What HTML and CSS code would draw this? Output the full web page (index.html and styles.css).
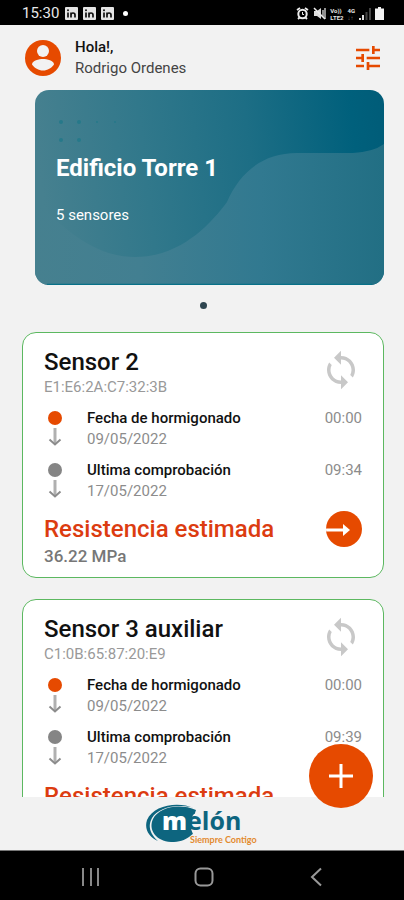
FILE: index.html
```
<!DOCTYPE html>
<html lang="es">
<head>
  <meta charset="utf-8">
  <meta name="viewport" content="width=device-width, initial-scale=1">
  <title>Melón - Sensores</title>
  <link rel="stylesheet" href="styles.css">
</head>
<body>
  <svg class="sprite" aria-hidden="true">
    <symbol id="sync" viewBox="0 0 24 24">
      <path d="M12 4V1L8 5l4 4V6c3.31 0 6 2.69 6 6 0 1.01-.25 1.97-.7 2.8l1.46 1.46C19.54 15.03 20 13.57 20 12c0-4.42-3.58-8-8-8zm0 14c-3.31 0-6-2.69-6-6 0-1.01.25-1.97.7-2.8L5.24 7.74C4.46 8.97 4 10.43 4 12c0 4.42 3.58 8 8 8v3l4-4-4-4v3z"/>
    </symbol>
    <symbol id="down" viewBox="0 0 14 18">
      <path d="M7 0v16" fill="none" stroke="#b0b0b0" stroke-width="3"/>
      <path d="M1.500 11.500L7 16.500l5.500-5" fill="none" stroke="#8c8c8c" stroke-width="2"/>
    </symbol>
    <symbol id="go" viewBox="0 0 36 36">
      <path d="M0 19h19" stroke="#fff" stroke-width="3"/>
      <path d="M17 13l7 6-7 6z" fill="#fff"/>
    </symbol>
    <symbol id="linkedin" viewBox="0 0 13 13">
      <rect width="13" height="13" rx="1" fill="#e4e4e4"/>
      <path d="M3 5.500V10.500M6 10.500V5.500M6 8q0-2 2-2t2 2v2.500" fill="none" stroke="#111" stroke-width="1.700"/>
      <circle cx="3" cy="3.200" r="1" fill="#111"/>
    </symbol>
  </svg>

  <div class="statusbar">
    <span class="clock">15:30</span>
    <svg class="notif"><use href="#linkedin"/></svg>
    <svg class="notif"><use href="#linkedin"/></svg>
    <svg class="notif"><use href="#linkedin"/></svg>
    <span class="notif-dot"></span>
    <div class="status-icons">
      <svg width="13" height="13" viewBox="0 0 13 13" fill="none" stroke="#eee">
        <circle cx="6.500" cy="7" r="4.200" stroke-width="2"/>
        <path d="M1 3l3-2M12 3L9 1M2 12l2-2M11 12l-2-2" stroke-width="1.800"/>
        <path d="M6.500 5v2.500H8"/>
      </svg>
      <svg width="13" height="13" viewBox="0 0 13 13">
        <path d="M1 4h3l4-3v11L4 9H1z" fill="#ddd"/>
        <path d="M10 3v7M12 1v11" stroke="#ddd" stroke-width="1.300"/>
        <path d="M1 1l11 11" stroke="#eee" stroke-width="1.500"/>
      </svg>
      <div class="net"><span>Vo))</span><span>LTE2</span></div>
      <div class="net"><span>4G</span><span class="traffic">↓↑</span></div>
      <svg width="12" height="12" viewBox="0 0 12 12">
        <path d="M0 10h2v2H0zM3 7h2v5H3z" fill="#ddd"/>
        <path d="M6.500 4h2v8h-2zM10 0h2v12h-2z" fill="#444"/>
      </svg>
      <svg width="9" height="13" viewBox="0 0 9 13">
        <path d="M3 0h3v1.500h3V13H0V1.500h3z" fill="#f2f2f2"/>
      </svg>
    </div>
  </div>

  <header class="header">
    <svg class="avatar" viewBox="0 0 36 36">
      <circle cx="18" cy="18" r="18" fill="#e64a00"/>
      <circle cx="18" cy="11" r="6" fill="#f2f2f2"/>
      <path d="M7 24.500C7 20.500 14 19 18 19s11 1.500 11 5.500c-2.500 3.500-6.500 6-11 6s-8.500-2.500-11-6z" fill="#f2f2f2"/>
    </svg>
    <div class="greeting">
      <strong>Hola!,</strong>
      <span>Rodrigo Ordenes</span>
    </div>
    <button class="icon-btn" type="button" aria-label="Filtros">
      <svg width="32" height="32" viewBox="0 0 24 24" fill="#e64a00">
        <path d="M3 17v2h6v-2H3zM3 5v2h10V5H3zm10 16v-2h8v-2h-8v-2h-2v6h2zM7 9v2H3v2h4v2h2V9H7zm14 4v-2H11v2h10zm-6-4h2V7h4V5h-4V3h-2v6z"/>
      </svg>
    </button>
  </header>

  <main class="main">
    <section class="building">
      <svg class="building-bg" viewBox="0 0 349 195" preserveAspectRatio="none">
        <defs>
          <linearGradient id="base" gradientUnits="userSpaceOnUse" x1="0" y1="40" x2="349" y2="0">
            <stop offset="0" stop-color="#46808f"/>
            <stop offset="0.300" stop-color="#31788b"/>
            <stop offset="0.600" stop-color="#1d6e85"/>
            <stop offset="0.900" stop-color="#00607c"/>
            <stop offset="1" stop-color="#005c78"/>
          </linearGradient>
          <linearGradient id="wave" gradientUnits="userSpaceOnUse" x1="0" y1="0" x2="349" y2="0">
            <stop offset="0" stop-color="#46808f"/>
            <stop offset="0.300" stop-color="#427f91"/>
            <stop offset="0.650" stop-color="#317990"/>
            <stop offset="1" stop-color="#226f84"/>
          </linearGradient>
        </defs>
        <rect width="349" height="195" fill="url(#base)"/>
        <path d="M0 110C30 140 60 167 100 167C145 167 175 135 192 112C205 82 228 63 262 63L318 63Q338 62 349 54V195H0z" fill="url(#wave)"/>
        <g fill="#26798a">
          <circle cx="26" cy="32" r="2"/><circle cx="44" cy="32" r="2"/>
          <circle cx="26" cy="50" r="2"/><circle cx="44" cy="50" r="2"/>
          <circle cx="62" cy="32" r="1"/><circle cx="80" cy="32" r="1"/>
        </g>
        <path d="M12 194.500H337" stroke="#087188" stroke-width="1.500"/>
      </svg>
      <h1>Edificio Torre 1</h1>
      <p>5 sensores</p>
    </section>
    <div class="pager"><span></span></div>

    <article class="sensor">
      <div class="sensor-head">
        <div>
          <h2>Sensor 2</h2>
          <p class="mac">E1:E6:2A:C7:32:3B</p>
        </div>
        <button class="icon-btn" type="button" aria-label="Sincronizar"><svg class="sync"><use href="#sync"/></svg></button>
      </div>
      <ol class="steps">
        <li>
          <div class="mark"><span class="dot dot-active"></span><svg class="down"><use href="#down"/></svg></div>
          <div class="step-text"><strong>Fecha de hormigonado</strong><span>09/05/2022</span></div>
          <time>00:00</time>
        </li>
        <li>
          <div class="mark"><span class="dot"></span><svg class="down"><use href="#down"/></svg></div>
          <div class="step-text"><strong>Ultima comprobación</strong><span>17/05/2022</span></div>
          <time>09:34</time>
        </li>
      </ol>
      <div class="result">
        <h3>Resistencia estimada</h3>
        <button class="go" type="button" aria-label="Ver detalle"><svg><use href="#go"/></svg></button>
      </div>
      <p class="value">36.22 MPa</p>
    </article>

    <article class="sensor">
      <div class="sensor-head">
        <div>
          <h2>Sensor 3 auxiliar</h2>
          <p class="mac">C1:0B:65:87:20:E9</p>
        </div>
        <button class="icon-btn" type="button" aria-label="Sincronizar"><svg class="sync"><use href="#sync"/></svg></button>
      </div>
      <ol class="steps">
        <li>
          <div class="mark"><span class="dot dot-active"></span><svg class="down"><use href="#down"/></svg></div>
          <div class="step-text"><strong>Fecha de hormigonado</strong><span>09/05/2022</span></div>
          <time>00:00</time>
        </li>
        <li>
          <div class="mark"><span class="dot"></span><svg class="down"><use href="#down"/></svg></div>
          <div class="step-text"><strong>Ultima comprobación</strong><span>17/05/2022</span></div>
          <time>09:39</time>
        </li>
      </ol>
      <div class="result">
        <h3>Resistencia estimada</h3>
      </div>
    </article>
  </main>

  <footer class="footer">
    <button class="fab" type="button" aria-label="Agregar sensor">
      <svg width="24" height="24" viewBox="0 0 24 24"><path d="M12 0v24M0 12h24" stroke="#fff" stroke-width="3"/></svg>
    </button>
    <svg class="logo" width="116" height="44" viewBox="0 0 116 44">
      <path d="M50 6C34-1 9 3 3 18c-3 9 2 17 11 21C5 31 4 23 8 16 14 6 32 1 50 6z" fill="#0d657f"/>
      <path d="M52 8C36 1 15 5 9 17c-5 11 3 22 18 23 8 0 14-2 18-5l5-4V14z" fill="#0d657f"/>
      <path d="M50 12c-4 4-5 12-1 20h8V12z" fill="#f2f2f2"/>
      <text class="logo-name" x="18" y="28"><tspan class="logo-m">m</tspan>elón</text>
      <text class="logo-tag" x="46" y="41">Siempre Contigo</text>
    </svg>
  </footer>

  <nav class="navbar">
    <button class="icon-btn" type="button" aria-label="Recientes">
      <svg width="20" height="20" viewBox="0 0 20 20"><path d="M3 1v18M11 1v18M18 1v18" stroke="#888" stroke-width="2"/></svg>
    </button>
    <button class="icon-btn" type="button" aria-label="Inicio">
      <svg width="20" height="20" viewBox="0 0 20 20"><rect x="1.500" y="1.500" width="17" height="17" rx="5" fill="none" stroke="#999" stroke-width="2"/></svg>
    </button>
    <button class="icon-btn" type="button" aria-label="Atrás">
      <svg width="20" height="20" viewBox="0 0 20 20"><path d="M14 1.500L5 10l9 8.500" fill="none" stroke="#999" stroke-width="2"/></svg>
    </button>
  </nav>
</body>
</html>
```

FILE: styles.css
```
* {
  box-sizing: border-box;
}
body {
  margin: 0;
  height: 100vh;
  display: flex;
  flex-direction: column;
  background-color: #f2f2f2;
  font-family: Roboto, "Liberation Sans", sans-serif;
  font-size: 15px;
  line-height: 21px;
  color: #111;
}
h1, h2, h3, p, ol {
  margin: 0;
  padding: 0;
}
h1, h2, h3 {
  font-size: 24px;
  line-height: 28px;
  font-weight: 500;
}
svg {
  display: block;
}
button {
  border: none;
  padding: 0;
  cursor: pointer;
}
strong {
  font-weight: 500;
}
.sprite {
  position: absolute;
  width: 0;
  height: 0;
}
.icon-btn {
  background: none;
}

/* status bar */
.statusbar {
  flex: none;
  display: flex;
  align-items: center;
  gap: 5px;
  height: 25px;
  padding: 2px 20px 0 22px;
  background-color: #000;
  color: #e8e8e8;
}
.clock {
  margin-right: 1px;
}
.notif {
  width: 13px;
  height: 13px;
}
.notif-dot {
  width: 5px;
  height: 5px;
  margin-left: 4px;
  border-radius: 50%;
  background-color: #fff;
}
.status-icons {
  display: flex;
  align-items: center;
  gap: 4px;
  margin-left: auto;
}
.net {
  display: flex;
  flex-direction: column;
  font-size: 6px;
  line-height: 7px;
  font-weight: 700;
}
.traffic {
  color: #777;
}

/* header */
.header {
  flex: none;
  display: flex;
  align-items: center;
  gap: 14px;
  height: 65px;
  padding: 0 20px 0 25px;
}
.avatar {
  width: 36px;
  height: 36px;
}
.greeting {
  flex: 1;
  display: flex;
  flex-direction: column;
  padding-top: 1px;
}
.greeting span {
  color: #444;
}

/* content */
.main {
  flex: 1;
  min-height: 0;
  overflow: hidden;
  padding: 0 20px 0 22px;
}
.building {
  position: relative;
  overflow: hidden;
  margin-left: 13px;
  padding: 64px 21px 59px;
  border-radius: 14px;
  color: #fff;
}
.building-bg {
  position: absolute;
  top: 0;
  left: 0;
  width: 100%;
  height: 100%;
}
.building h1 {
  position: relative;
  margin-bottom: 23px;
  font-weight: 700;
}
.building p {
  position: relative;
}
.pager {
  display: flex;
  justify-content: center;
  padding: 17px 0 23px;
}
.pager span {
  width: 7px;
  height: 7px;
  border-radius: 50%;
  background-color: #2f4650;
}
.sensor {
  margin-bottom: 21px;
  padding: 15px 21px 12px;
  border: 1px solid #5cb860;
  border-radius: 14px;
  background-color: #fff;
}
.sensor-head {
  display: flex;
  justify-content: space-between;
  align-items: flex-start;
  margin-bottom: 10px;
}
.mac {
  padding-top: 1px;
  color: #999;
}
.sync {
  width: 42px;
  height: 42px;
  margin-top: 1px;
  fill: #c8c8c8;
}
.steps {
  display: flex;
  flex-direction: column;
  gap: 10px;
  list-style: none;
}
.steps li {
  display: flex;
}
.mark {
  display: flex;
  flex-direction: column;
  align-items: center;
  gap: 3px;
  width: 22px;
  padding-top: 3px;
  margin-right: 21px;
}
.dot {
  width: 14px;
  height: 14px;
  border-radius: 50%;
  background-color: #858585;
}
.dot-active {
  background-color: #e64a00;
}
.down {
  width: 14px;
  height: 18px;
}
.step-text {
  flex: 1;
  display: flex;
  flex-direction: column;
}
.step-text span, .steps time {
  color: #8c8c8c;
}
.result {
  display: flex;
  justify-content: space-between;
  align-items: center;
  min-height: 36px;
  margin-top: 9px;
}
.result h3 {
  color: #dc3c10;
}
.go {
  width: 36px;
  height: 36px;
  border-radius: 50%;
  overflow: hidden;
  background-color: #e64a00;
}
.go svg {
  width: 36px;
  height: 36px;
}
.value {
  font-size: 17px;
  line-height: 18px;
  font-weight: 500;
  color: #777;
}

/* footer */
.footer {
  flex: none;
  position: relative;
  display: flex;
  justify-content: center;
  align-items: center;
  height: 53px;
}
.fab {
  position: absolute;
  right: 31px;
  bottom: 42px;
  display: flex;
  justify-content: center;
  align-items: center;
  width: 64px;
  height: 64px;
  border-radius: 50%;
  background-color: #e64a00;
}
.logo-name {
  font-family: "Open Sans", sans-serif;
  font-size: 25px;
  font-weight: 700;
  fill: #0d657f;
}
.logo-m {
  font-weight: 800;
  fill: #fff;
}
.logo-tag {
  font-family: Lato, sans-serif;
  font-size: 9px;
  font-weight: 700;
  fill: #e38a2e;
}
.navbar {
  flex: none;
  display: flex;
  justify-content: space-between;
  align-items: center;
  height: 50px;
  padding: 3px 77px 0 80px;
  border-top: 1px solid #777;
  background-color: #000;
}
```
